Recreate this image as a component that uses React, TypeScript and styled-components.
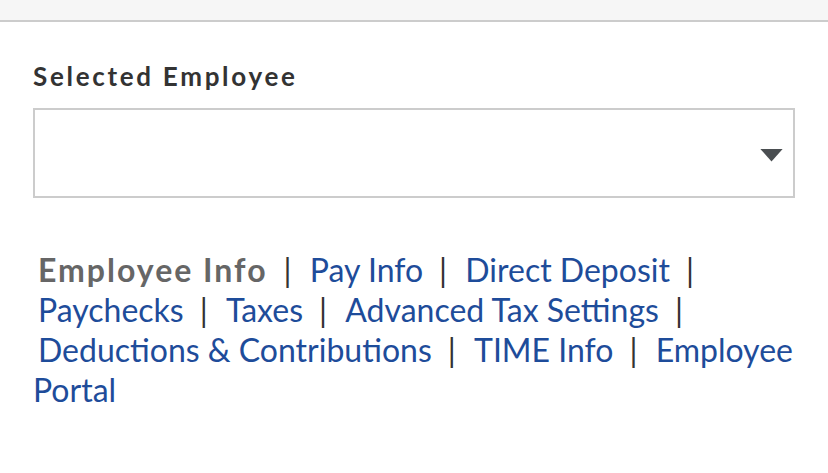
import React from 'react';
import { createGlobalStyle, styled } from 'styled-components';

const GlobalStyle = createGlobalStyle`
  html, body {
    margin: 0;
    padding: 0;
    background: #ffffff;
  }
  body {
    font-family: Lato, "Liberation Sans", sans-serif;
  }
`;

type LinkItem = { label: string; current?: boolean };

const links: LinkItem[] = [
  { label: 'Employee Info', current: true },
  { label: 'Pay Info' },
  { label: 'Direct Deposit' },
  { label: 'Paychecks' },
  { label: 'Taxes' },
  { label: 'Advanced Tax Settings' },
  { label: 'Deductions & Contributions' },
  { label: 'TIME Info' },
  { label: 'Employee Portal' },
];

export default function App() {
  return (
    <>
      <GlobalStyle />
      <Page>
        <TopBar />
        <Content>
          <FieldLabel htmlFor="employee">Selected Employee</FieldLabel>
          <SelectWrap>
            <Select id="employee" defaultValue="">
              <option value=""></option>
            </Select>
            <Caret viewBox="0 0 24 14" aria-hidden>
              <path d="M0 0 H24 L12 13.5 Z" fill="#4a4e51" />
            </Caret>
          </SelectWrap>
          <Nav>
            {links.map((link, i) => (
              <React.Fragment key={link.label}>
                {link.current ? (
                  <Current>{link.label}</Current>
                ) : (
                  <NavLink href="#">{link.label}</NavLink>
                )}
                {i < links.length - 1 && (
                  <>
                    <Sep>|</Sep>{' '}
                  </>
                )}
              </React.Fragment>
            ))}
          </Nav>
        </Content>
      </Page>
    </>
  );
}

const Page = styled.div`
  width: 828px;
  min-height: 473px;
  background: #fff;
`;

const TopBar = styled.div`
  height: 20px;
  background: #f6f6f6;
  border-bottom: 2px solid #cccccc;
`;

const Content = styled.div`
  width: 762px;
  padding: 38px 33px 0 33px;
  display: flex;
  flex-direction: column;
`;

const FieldLabel = styled.label`
  font-size: 26px;
  font-weight: 700;
  letter-spacing: 2.7px;
  color: #333333;
  line-height: 32px;
`;

const SelectWrap = styled.div`
  position: relative;
  margin-top: 16px;
  height: 90px;
`;

const Select = styled.select`
  appearance: none;
  width: 100%;
  height: 100%;
  border: 2px solid #cccccc;
  border-radius: 0;
  background: #fff;
  font-family: inherit;
  font-size: 24px;
  padding: 0 60px 0 16px;
  outline: none;
`;

const Caret = styled.svg`
  position: absolute;
  right: 12px;
  top: 41px;
  width: 23px;
  height: 13px;
  pointer-events: none;
`;

const Nav = styled.div`
  margin-top: 52px;
  font-size: 32px;
  line-height: 40px;
  color: #333333;
`;

const Current = styled.span`
  padding-left: 5px;
  font-weight: 700;
  letter-spacing: 2px;
  color: #666666;
`;

const NavLink = styled.a`
  padding-left: 5px;
  color: #1e4c9a;
  text-decoration: none;
`;

const Sep = styled.span`
  display: inline-block;
  padding: 0 5px 0 16px;
  color: #333333;
`;
